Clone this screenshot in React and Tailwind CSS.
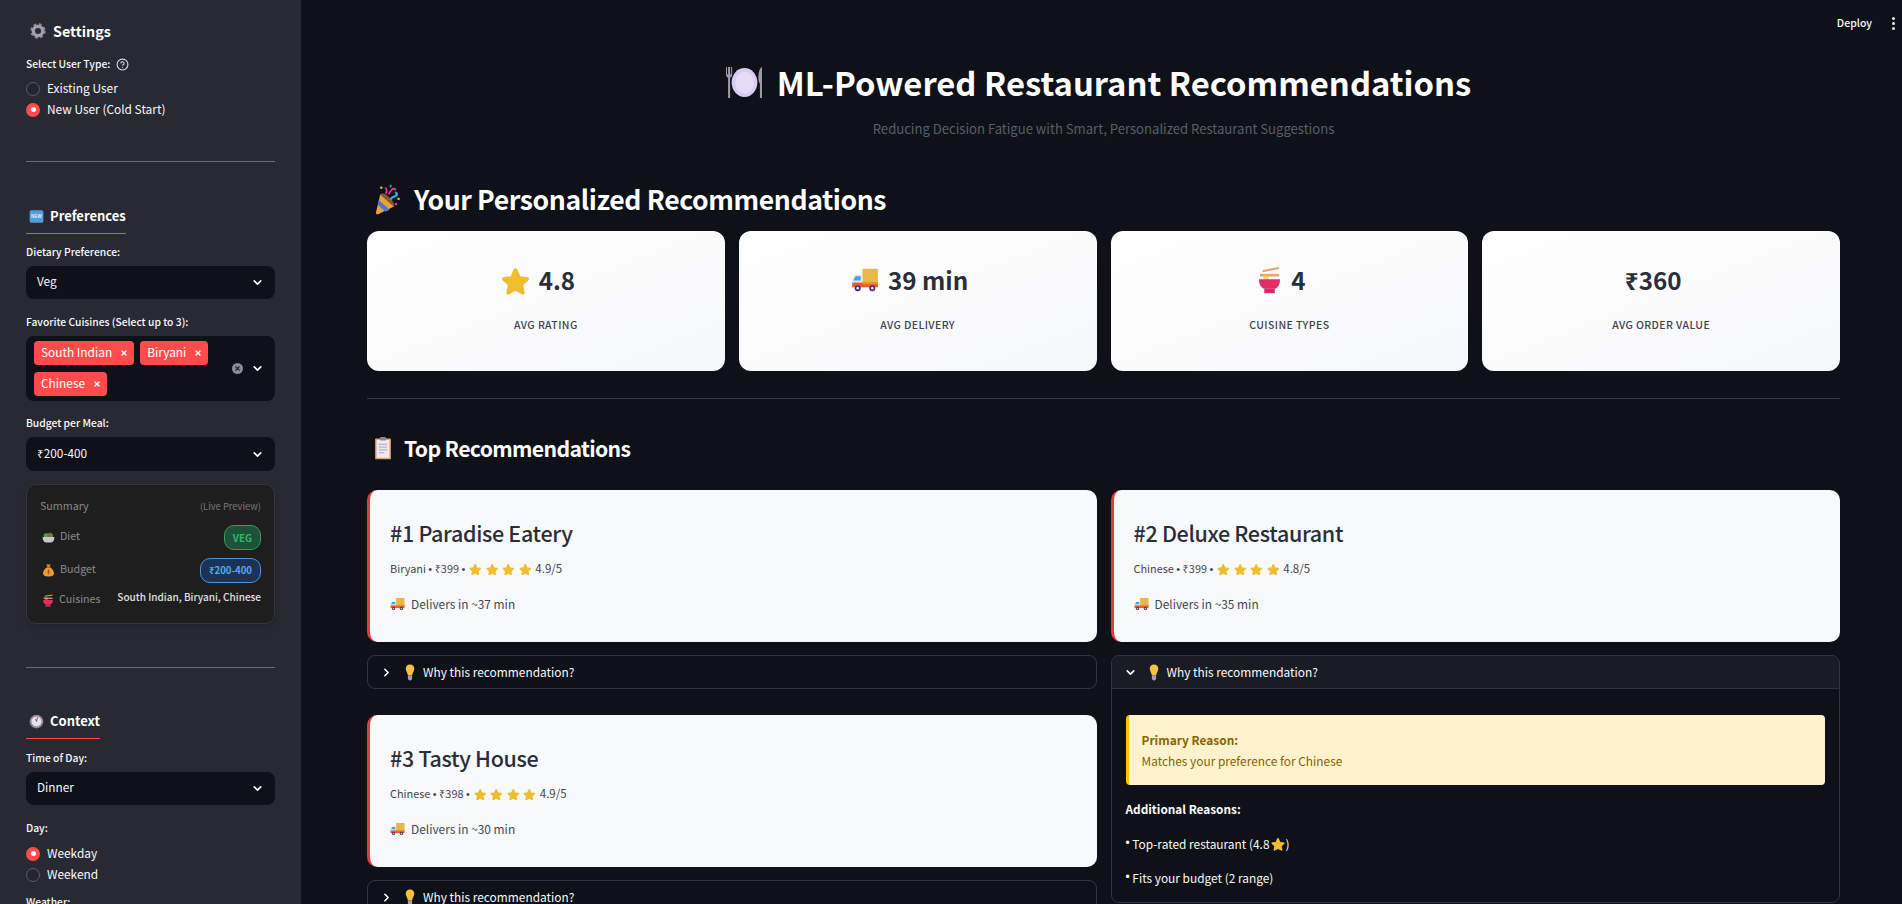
import { ChevronDown, ChevronRight, X, CircleHelp } from "lucide-react";

const emojiClass = "inline-block shrink-0";

function Gear({ className }) {
  return (
    <svg viewBox="0 0 24 24" className={`${emojiClass} ${className}`}>
      <circle cx="12" cy="12" r="9.6" fill="none" stroke="#8d8899" strokeWidth="4" strokeDasharray="4 3.54" />
      <circle cx="12" cy="12" r="7" fill="none" stroke="#a29eb0" strokeWidth="5" />
    </svg>
  );
}

function NewBadge({ className }) {
  return (
    <svg viewBox="0 0 24 24" className={`${emojiClass} ${className}`}>
      <rect x="1" y="2" width="22" height="20" rx="3" fill="#4f9fe0" />
      <text x="12" y="15" textAnchor="middle" fontSize="7.5" fontWeight="700" fill="#dff0ff" fontFamily="Liberation Sans">NEW</text>
    </svg>
  );
}

function Plate({ className }) {
  return (
    <svg viewBox="0 0 36 30" className={`${emojiClass} ${className}`}>
      <ellipse cx="18" cy="15" rx="12.500" ry="14" fill="#d8cdf0" />
      <ellipse cx="18" cy="15" rx="9" ry="10.500" fill="#e6dcf8" />
      <path d="M0 0v7c0 2 1 3 2 3.500V30h2V10.500C5 10 6 9 6 7V0H5v7H4V0H2v7H1V0z" fill="#a09ba8" />
      <path d="M33 30h2V0c-2 1-3.500 5-3.500 10 0 3 .5 5 1.500 6z" fill="#a09ba8" />
    </svg>
  );
}

function Popper({ className }) {
  return (
    <svg viewBox="0 0 32 36" className={`${emojiClass} ${className}`}>
      <path d="M7 12 2 33c-.3 1.500 1 2.500 2.500 2L23 26z" fill="#e8a13c" />
      <path d="M5.500 19 18 30l-5 2.200L4 24z" fill="#4d78c9" />
      <path d="M7 12 23 26c1.500-2-2-7-6-11S8.500 10 7 12z" fill="#8a5a2c" />
      <path d="M13 11c3-2 1-5 0-7" stroke="#e93d9b" strokeWidth="2" fill="none" />
      <path d="M19 18c2-5 5-2 7-5 1-2 0-3-2-3" stroke="#37a7e8" strokeWidth="2.500" fill="none" />
      <path d="M17 12c1-4 3-4 4-6 1-1 3-1 4 1" stroke="#e93d9b" strokeWidth="2" fill="none" />
      <rect x="7" y="3" width="2.500" height="2.500" fill="#f5c33b" />
      <rect x="27" y="16" width="2.500" height="2.500" fill="#f5c33b" />
      <rect x="18" y="1" width="2" height="3" fill="#37a7e8" />
      <rect x="24" y="22" width="2.500" height="2.500" fill="#e93d9b" />
    </svg>
  );
}

function Star({ className }) {
  return (
    <svg viewBox="0 0 24 24" className={`${emojiClass} ${className}`}>
      <path
        d="M12 1.800c.8 0 1.300.5 1.700 1.400l2.200 5.300 5.600.6c1.700.2 2.200 1.700 1 2.800l-4.200 3.900 1.200 5.900c.3 1.500-1 2.400-2.300 1.600L12 20.400l-5.200 2.900c-1.300.8-2.600-.1-2.300-1.600l1.200-5.900-4.200-3.900c-1.200-1.100-.7-2.600 1-2.800l5.600-.6 2.200-5.300c.4-.9.900-1.400 1.700-1.400z"
        fill="#efbd30"
      />
    </svg>
  );
}

function Truck({ className }) {
  return (
    <svg viewBox="0 0 32 28" className={`${emojiClass} ${className}`}>
      <rect x="13" y="1" width="18" height="18" rx="1.500" fill="#e7b84b" />
      <path d="M4 8h9v11H1v-5z" fill="#e9e4df" />
      <path d="M5 9.500h6v5H2.500z" fill="#3aa7e3" />
      <path d="M1 17h30v5.500H1z" fill="#ee5a2d" />
      <path d="M13 17h18v2H13z" fill="#f08a2c" />
      <circle cx="7.500" cy="23.500" r="3.500" fill="#4b2a68" />
      <circle cx="7.500" cy="23.500" r="1.500" fill="#e8e0ee" />
      <circle cx="24.500" cy="23.500" r="3.500" fill="#4b2a68" />
      <circle cx="24.500" cy="23.500" r="1.500" fill="#e8e0ee" />
    </svg>
  );
}

function Noodles({ className }) {
  return (
    <svg viewBox="0 0 28 32" className={`${emojiClass} ${className}`}>
      <path d="M6 4.500 25 1v2.500L6 7z" fill="#e0a873" />
      <path d="M3 9h22v3H3z" fill="#e0a873" />
      <path d="M8 9v8M10 9v8M12 9v8" stroke="#f2c22f" strokeWidth="1.200" />
      <path d="M2 15h24c0 7-3 10-6 11H8C5 25 2 22 2 15z" fill="#e32d68" />
      <path d="M8 26h12v5H8z" fill="#d92a62" />
    </svg>
  );
}

function Clipboard({ className }) {
  return (
    <svg viewBox="0 0 24 32" className={`${emojiClass} ${className}`}>
      <rect x="1" y="2" width="22" height="29" rx="1" fill="#dd9f69" />
      <path d="M3 4h18v25H3z" fill="#ece8f4" />
      <rect x="8" y="0" width="8" height="5" rx="1" fill="#8a8794" />
      <path d="M6 10h12M6 14h12M6 18h12M6 22h8" stroke="#a7a1b8" strokeWidth="1.300" />
    </svg>
  );
}

function Bulb({ className }) {
  return (
    <svg viewBox="0 0 16 28" className={`${emojiClass} ${className}`}>
      <path d="M8 1c4.500 0 7 3.200 7 6.800 0 3.800-3 6.200-3.500 11.200h-7C4 14 1 11.600 1 7.800 1 4.200 3.500 1 8 1z" fill="#f7c13c" />
      <path d="M4.500 19h7v5c0 2-1.500 3-3.500 3s-3.500-1-3.500-3z" fill="#a3a1ab" />
    </svg>
  );
}

function Salad({ className }) {
  return (
    <svg viewBox="0 0 24 24" className={`${emojiClass} ${className}`}>
      <circle cx="8" cy="9" r="5" fill="#56a04a" />
      <circle cx="15" cy="8" r="5" fill="#3f8f46" />
      <circle cx="12" cy="8" r="2.200" fill="#d9433a" />
      <circle cx="18" cy="10" r="2" fill="#e4572f" />
      <path d="M1 11h22c0 6-3 10-6 10H7c-3 0-6-4-6-10z" fill="#c9c6d2" />
    </svg>
  );
}

function MoneyBag({ className }) {
  return (
    <svg viewBox="0 0 24 24" className={`${emojiClass} ${className}`}>
      <path d="M8 1h8l-2 5h-4z" fill="#e28a2a" />
      <path d="M9 6h6c5 3 7 8 7 11 0 4-3 6-10 6S2 21 2 17c0-3 2-8 7-11z" fill="#ee9b2f" />
      <path d="M9 6h6" stroke="#8a5a2c" strokeWidth="1.500" />
      <path d="M12 10v9M10 13h4M10 16h4" stroke="#7c4a1c" strokeWidth="1.300" />
    </svg>
  );
}

function Clock({ className }) {
  return (
    <svg viewBox="0 0 24 24" className={`${emojiClass} ${className}`}>
      <circle cx="12" cy="12" r="11" fill="#8f8b93" />
      <circle cx="12" cy="12" r="8" fill="#e5e2e8" />
      <path d="M12 12l1.500-7" stroke="#e0334f" strokeWidth="1.600" />
      <path d="M12 12 10 8" stroke="#55505c" strokeWidth="1.200" />
    </svg>
  );
}

// the CJK font's bullet is far too wide, take it from Liberation
function Dot() {
  return <span className="font-['Liberation_Sans']">•</span>;
}

function Label({ children, className = "" }) {
  return <div className={`h-[18px] text-[10.300px] leading-[18px] font-medium text-[#fafafa] flex items-center ${className}`}>{children}</div>;
}

function Radio({ checked, children }) {
  return (
    <div className="h-[21px] flex items-center gap-[7px] text-[11.900px] text-[#fafafa]">
      {checked ? (
        <span className="w-[14px] h-[14px] rounded-full bg-[#ff4b4b] flex items-center justify-center">
          <span className="w-[5px] h-[5px] rounded-full bg-white" />
        </span>
      ) : (
        <span className="w-[14px] h-[14px] rounded-full border border-[#5b5c66] bg-[#24252e]" />
      )}
      <span className="pb-[2px]">{children}</span>
    </div>
  );
}

function Select({ value, className = "" }) {
  return (
    <div className={`flex items-center justify-between pl-[11px] pr-[11px] rounded-lg bg-[#0e1117] text-[11.800px] text-[#fafafa] ${className}`}>
      <span className="pb-[3px]">{value}</span>
      <ChevronDown size={13} strokeWidth={3} />
    </div>
  );
}

function Tag({ children }) {
  return (
    <span className="h-[24px] flex items-center gap-[8px] pl-[7px] pr-[6px] rounded-[4px] bg-[#ff4b4b] text-[11.900px] text-white">
      <span className="pb-[2px]">{children}</span>
      <X size={8} strokeWidth={4} />
    </span>
  );
}

function SideHeading({ icon, children, mt }) {
  return (
    <div className={`w-fit h-[29px] pb-[6px] border-b border-[#ff4b4b] flex items-center gap-[6px] pl-[3px] text-[13px] font-bold text-white ${mt}`}>
      {icon}
      <span>{children}</span>
    </div>
  );
}

function Sidebar() {
  return (
    <aside className="w-[301px] shrink-0 h-full overflow-hidden bg-[#282933] pt-[20px] pl-[26px] pr-[26px]">
      <div className="h-[22px] flex items-center gap-[7px] pl-[4px] text-[14.300px] font-bold text-white">
        <Gear className="w-[16px] h-[16px]" />
        <span>Settings</span>
      </div>
      <Label className="mt-[13px] gap-[6px]">
        Select User Type:
        <CircleHelp size={13} className="text-[#e0e0e5]" />
      </Label>
      <div className="mt-[5px]">
        <Radio>Existing User</Radio>
        <Radio checked>New User (Cold Start)</Radio>
      </div>
      <div className="mt-[41px] h-px bg-[#6b6b72]" />

      <SideHeading mt="mt-[43px]" icon={<NewBadge className="w-[15px] h-[15px]" />}>Preferences</SideHeading>
      <Label className="mt-[9px]">Dietary Preference:</Label>
      <Select value="Veg" className="mt-[5px] h-[33px]" />
      <Label className="mt-[14px]">Favorite Cuisines (Select up to 3):</Label>
      <div className="mt-[5px] h-[65px] rounded-lg bg-[#0e1117] flex items-center pl-[8px] pr-[11px]">
        <div className="flex-1 flex flex-wrap gap-x-[6px] gap-y-[7px]">
          <Tag>South Indian</Tag>
          <Tag>Biryani</Tag>
          <Tag>Chinese</Tag>
        </div>
        <span className="w-[11px] h-[11px] mr-[8px] rounded-full bg-[#8c8d94] flex items-center justify-center text-[#20212a]">
          <X size={7} strokeWidth={4} />
        </span>
        <ChevronDown size={13} strokeWidth={3} className="text-white" />
      </div>
      <Label className="mt-[13px]">Budget per Meal:</Label>
      <Select value="₹200-400" className="mt-[5px] h-[34px]" />

      <div className="mt-[13px] h-[140px] rounded-[10px] border border-[#36363a] bg-[#1e1e1e] shadow-md px-[13px] pt-[12px]">
        <div className="h-[18px] flex items-center justify-between">
          <span className="text-[10.700px] text-[#8a8a8a]">Summary</span>
          <span className="text-[9.400px] text-[#777777]">(Live Preview)</span>
        </div>
        <div className="mt-[10px] h-[25px] flex items-center justify-between text-[10.700px] text-[#8a8a8a]">
          <span className="flex items-center gap-[5px] pl-[2px]"><Salad className="w-[13px] h-[13px]" /><span className="pb-[2px]">Diet</span></span>
          <span className="w-[37px] h-[25px] rounded-[10px] border border-[#2e9e5b] bg-[#1d5238] flex items-center justify-center text-[10px] font-bold text-[#2fb866]">VEG</span>
        </div>
        <div className="mt-[8px] h-[25px] flex items-center justify-between text-[10.700px] text-[#8a8a8a]">
          <span className="flex items-center gap-[5px] pl-[2px]"><MoneyBag className="w-[13px] h-[13px]" /><span className="pb-[2px]">Budget</span></span>
          <span className="w-[61px] h-[25px] rounded-[10px] border border-[#4f93d6] bg-[#1b3357] flex items-center justify-center text-[9.600px] font-bold text-[#5aa9ef]">₹200-400</span>
        </div>
        <div className="mt-[8px] h-[18px] flex items-center justify-between text-[10.700px] text-[#8a8a8a]">
          <span className="flex items-center gap-[5px] pl-[2px]"><Noodles className="w-[12px] h-[13px]" /><span className="pb-[2px]">Cuisines</span></span>
          <span className="-mt-[7px] whitespace-nowrap text-[10px] font-medium text-[#e0e0e0]">South Indian, Biryani, Chinese</span>
        </div>
      </div>

      <div className="mt-[43px] h-px bg-[#6b6b72]" />
      <SideHeading mt="mt-[42px]" icon={<Clock className="w-[15px] h-[15px]" />}>Context</SideHeading>
      <Label className="mt-[10px]">Time of Day:</Label>
      <Select value="Dinner" className="mt-[5px] h-[33px]" />
      <Label className="mt-[14px]">Day:</Label>
      <div className="mt-[6px]">
        <Radio checked>Weekday</Radio>
        <Radio>Weekend</Radio>
      </div>
      <Label className="mt-[8px]">Weather:</Label>
    </aside>
  );
}

function Metric({ icon, value, label }) {
  return (
    <div className="h-[140px] rounded-[12px] bg-gradient-to-br from-white to-[#f6f7f9] flex flex-col items-center pt-[31px]">
      <div className="h-[36px] mr-[16px] flex items-center gap-[9px] text-[24.200px] font-bold text-[#2b2d3a]">
        {icon}
        <span>{value}</span>
      </div>
      <div className="mt-[19px] text-[10.500px] font-medium tracking-[0.4px] text-[#40424f]">{label}</div>
    </div>
  );
}

function RecCard({ rank, name, cuisine, price, rating, eta }) {
  return (
    <div className="h-[152px] rounded-[10px] border-l-[3px] border-[#e63946] bg-[#f8f9fa] pl-[20px] pt-[28px]">
      <div className="h-[30px] flex items-center text-[21.500px] font-medium tracking-[-0.33px] text-[#2b2d3a]">#{rank} {name}</div>
      <div className="mt-[12px] h-[18px] flex items-center text-[10.900px] text-[#444654]">
        <span>{cuisine} <Dot /> {price} <Dot /></span>
        <span className="flex items-center gap-[4px] ml-[4px] mr-[4px]">
          <Star className="w-[12.500px] h-[12.500px]" />
          <Star className="w-[12.500px] h-[12.500px]" />
          <Star className="w-[12.500px] h-[12.500px]" />
          <Star className="w-[12.500px] h-[12.500px]" />
        </span>
        <span className="text-[11.500px]">{rating}/5</span>
      </div>
      <div className="mt-[16px] h-[20px] flex items-center gap-[6px] text-[11.900px] text-[#444654]">
        <Truck className="w-[15px] h-[14px]" />
        <span>Delivers in ~{eta} min</span>
      </div>
    </div>
  );
}

function ExpanderHeader({ open }) {
  return (
    <div className={`flex items-center pl-[12px] text-[11.900px] text-[#fafafa] ${open ? "h-[33px] bg-[#1a1c24] border-b border-[#33353d]" : "h-[32px]"}`}>
      {open ? <ChevronDown size={13} strokeWidth={3} /> : <ChevronRight size={13} strokeWidth={3} />}
      <Bulb className="w-[10px] h-[17px] ml-[12px] mr-[8px]" />
      <span>Why this recommendation?</span>
    </div>
  );
}

function Main() {
  return (
    <main className="flex-1 h-full overflow-hidden bg-[#0e1117]">
      <div className="h-[46px] flex items-center justify-end gap-[20px] pr-[7px] text-[10.500px] font-medium text-[#fafafa]">
        <span>Deploy</span>
        <span className="flex flex-col gap-[2px]">
          <span className="w-[3px] h-[3px] rounded-full bg-[#e8e8e8]" />
          <span className="w-[3px] h-[3px] rounded-full bg-[#e8e8e8]" />
          <span className="w-[3px] h-[3px] rounded-full bg-[#e8e8e8]" />
        </span>
      </div>
      <div className="pl-[66px] pr-[62px]">
        <div className="mt-[12px] h-[48px] mr-[10px] flex items-center justify-center gap-[14px] text-[32.800px] font-bold text-white">
          <Plate className="w-[37px] h-[31px]" />
          <span>ML-Powered Restaurant Recommendations</span>
        </div>
        <div className="mt-[13px] h-[20px] flex items-center justify-center text-[13.100px] text-[#5c5e66]">
          Reducing Decision Fatigue with Smart, Personalized Restaurant Suggestions
        </div>
        <div className="mt-[41px] h-[38px] flex items-center gap-[12px] pl-[7px] text-[26.600px] font-semibold tracking-[-0.4px] text-white">
          <Popper className="w-[28px] h-[31px]" />
          <span>Your Personalized Recommendations</span>
        </div>
        <div className="mt-[13px] grid grid-cols-4 gap-[14px]">
          <Metric icon={<Star className="w-[29px] h-[29px]" />} value="4.8" label="AVG RATING" />
          <Metric icon={<Truck className="w-[28px] h-[24px]" />} value="39 min" label="AVG DELIVERY" />
          <Metric icon={<Noodles className="w-[25px] h-[28px]" />} value="4" label="CUISINE TYPES" />
          <Metric value="₹360" label="AVG ORDER VALUE" />
        </div>
        <div className="mt-[27px] h-px bg-[#3a3b41]" />
        <div className="mt-[33px] h-[32px] flex items-center gap-[12px] pl-[7px] text-[21.200px] font-semibold tracking-[-0.65px] text-white">
          <Clipboard className="w-[18px] h-[23px]" />
          <span>Top Recommendations</span>
        </div>
        <div className="mt-[26px] grid grid-cols-2 gap-[14px]">
          <div>
            <RecCard rank={1} name="Paradise Eatery" cuisine="Biryani" price="₹399" rating="4.9" eta={37} />
            <div className="mt-[13px] h-[34px] rounded-lg border border-[#33353d]"><ExpanderHeader /></div>
            <div className="mt-[26px]">
              <RecCard rank={3} name="Tasty House" cuisine="Chinese" price="₹398" rating="4.9" eta={30} />
            </div>
            <div className="mt-[13px] h-[34px] rounded-lg border border-[#33353d]"><ExpanderHeader /></div>
          </div>
          <div>
            <RecCard rank={2} name="Deluxe Restaurant" cuisine="Chinese" price="₹399" rating="4.8" eta={35} />
            <div className="mt-[13px] h-[248px] rounded-lg border border-[#33353d] overflow-hidden">
              <ExpanderHeader open />
              <div className="px-[14px] pt-[26px]">
                <div className="h-[70px] rounded-[4px] border-l-[3px] border-[#ffc107] bg-[#fff3cd] pl-[13px] pt-[15px] text-[11.900px] text-[#856404]">
                  <div className="h-[20px] flex items-center font-semibold">Primary Reason:</div>
                  <div className="h-[21px] flex items-center">Matches your preference for Chinese</div>
                </div>
                <div className="mt-[14px] h-[20px] flex items-center text-[11.800px] font-bold text-[#fafafa]">Additional Reasons:</div>
                <div className="mt-[15px] h-[20px] flex items-center text-[11.900px] text-[#fafafa]">
                  <Dot />&nbsp;Top-rated restaurant (4.8<Star className="w-[14px] h-[14px] mx-[1px]" />)
                </div>
                <div className="mt-[14px] h-[20px] flex items-center text-[11.900px] text-[#fafafa]"><Dot />&nbsp;Fits your budget (2 range)</div>
              </div>
            </div>
          </div>
        </div>
      </div>
    </main>
  );
}

export default function App() {
  return (
    <div className="flex h-[904px] overflow-hidden font-['Noto_Sans_CJK_SC','Noto_Sans',sans-serif]">
      <Sidebar />
      <Main />
    </div>
  );
}
